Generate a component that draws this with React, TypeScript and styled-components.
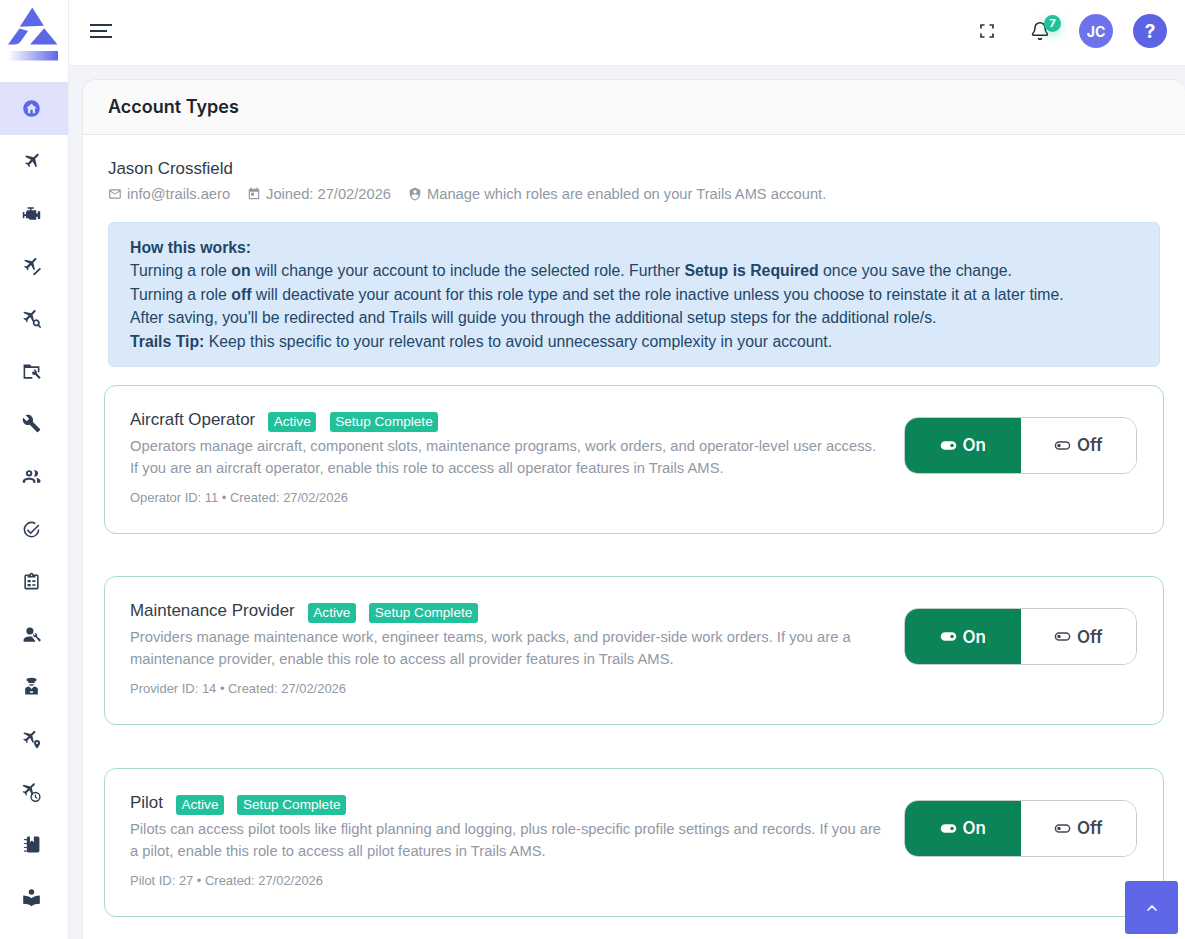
import React from "react";
import styled, { createGlobalStyle } from "styled-components";
import { Bell, ChevronUp } from "lucide-react";

const GlobalStyle = createGlobalStyle`
  html, body {
    margin: 0;
    padding: 0;
    height: 100%;
    overflow: hidden;
    background: #fff;
    font-family: "Liberation Sans", Arial, sans-serif;
  }
  * { box-sizing: border-box; }
`;

const PLANE =
  "M20.56 3.91C21.15 4.5 21.15 5.45 20.56 6.03L16.67 9.92L18.79 19.11L17.38 20.53L13.5 13.25L9.6 17.14L9.96 19.61L8.89 20.67L7.13 17.49L3.94 15.72L5 14.65L7.5 15L11.36 11.11L4.08 7.25L5.5 5.83L14.69 7.95L18.58 4.06C19.17 3.47 20.17 3.47 20.56 3.91Z";
const WRENCH =
  "M22.7,19L13.6,9.9C14.5,7.6 14,4.9 12.1,3C10.1,1 7.1,0.6 4.7,1.7L9,6L6,9L1.6,4.7C0.4,7.1 0.9,10.1 2.9,12.1C4.8,14 7.5,14.5 9.8,13.6L18.9,22.7C19.3,23.1 19.9,23.1 20.3,22.7L22.6,20.4C23.1,20 23.1,19.3 22.7,19Z";

const Shell = styled.div`
  display: flex;
  width: 100%;
  height: 939px;
  overflow: hidden;
`;

const Sidebar = styled.aside`
  flex: 0 0 69px;
  height: 100%;
  background: #fff;
  border-right: 1px solid #eceef6;
  display: flex;
  flex-direction: column;
`;

const LogoBar = styled.div`
  height: 66px;
  flex-shrink: 0;
  display: flex;
  align-items: flex-start;
`;

const Nav = styled.nav`
  padding-top: 16px;
  display: flex;
  flex-direction: column;
`;

const NavItem = styled.div<{ $active?: boolean }>`
  height: 52.6px;
  flex-shrink: 0;
  display: flex;
  align-items: center;
  padding-left: 22px;
  background: ${(p) => (p.$active ? "#e0e1fa" : "transparent")};
  color: ${(p) => (p.$active ? "#5d68e6" : "#2f3d55")};
`;

const NavSvg = styled.svg`
  width: 19px;
  height: 19px;
  fill: currentColor;
  display: block;
`;

const Main = styled.div`
  flex: 1;
  min-width: 0;
  display: flex;
  flex-direction: column;
`;

const TopBar = styled.header`
  height: 66px;
  flex-shrink: 0;
  background: #fff;
  border-bottom: 1px solid #eff0f6;
  display: flex;
  align-items: center;
  padding: 0 18px 3px 21px;
`;

const Burger = styled.div`
  display: flex;
  flex-direction: column;
  gap: 4px;
  width: 22px;
`;

const BurgerLine = styled.span<{ $short?: boolean }>`
  display: block;
  height: 2px;
  width: ${(p) => (p.$short ? "17px" : "22px")};
  background: #2a3547;
`;

const TopActions = styled.div`
  margin-left: auto;
  display: flex;
  align-items: center;
`;

const BellWrap = styled.div`
  position: relative;
  width: 20px;
  height: 20px;
  margin-left: 35px;
  color: #1f2937;
  display: flex;
`;

const BellBadge = styled.span`
  position: absolute;
  top: -6px;
  left: 14px;
  width: 17px;
  height: 17px;
  border-radius: 50%;
  background: #22c09b;
  box-shadow: 0 3px 10px rgba(34, 192, 155, 0.35);
  color: #fff;
  font: 700 11px/17px Inter, sans-serif;
  text-align: center;
`;

const RoundButton = styled.div<{ $left: number; $bg: string; $size: number }>`
  width: 34px;
  height: 34px;
  margin-left: ${(p) => p.$left}px;
  border-radius: 50%;
  background: ${(p) => p.$bg};
  color: #fff;
  display: flex;
  align-items: center;
  justify-content: center;
  font-family: Inter, sans-serif;
  font-size: ${(p) => p.$size}px;
  font-weight: 700;
`;

const Content = styled.main`
  flex: 1;
  min-height: 0;
  background: #f3f4f9;
  padding: 13px 0 0 13px;
`;

const Card = styled.section`
  background: #fff;
  border: 1px solid #e6e8ee;
  border-width: 1px 0 0 1px;
  border-radius: 14px 14px 0 0;
  height: 900px;
`;

const CardHeader = styled.div`
  height: 55px;
  background: #fafafa;
  border-bottom: 1px solid #e4e5ea;
  border-radius: 14px 14px 0 0;
  padding-left: 25px;
  display: flex;
  align-items: center;
`;

const CardTitle = styled.h1`
  margin: 0;
  font: 600 18px/24px Inter, sans-serif;
  color: #212529;
`;

const CardBody = styled.div`
  padding: 23px 21px 0 21px;
`;

const Profile = styled.div`
  padding: 0 4px;
`;

const ProfileName = styled.div`
  font-size: 16.9px;
  line-height: 22px;
  color: #343a46;
`;

const ProfileMeta = styled.div`
  display: flex;
  margin-top: 4px;
  gap: 17px;
  font-size: 14.7px;
  line-height: 20px;
  color: #9199a5;
`;

const MetaItem = styled.span`
  display: flex;
  align-items: center;
  gap: 5px;
`;

const MetaSvg = styled.svg`
  width: 14px;
  height: 14px;
  fill: #9199a5;
`;

const InfoBox = styled.div`
  margin: 18px 4px 17.5px;
  padding: 12.6px 21px;
  height: 145px;
  background: #d9e9fa;
  border: 1px solid #cde2f7;
  border-radius: 6px;
  color: #1f4668;
  font-size: 15.8px;
  line-height: 23.6px;
`;

const InfoLine = styled.div`
  white-space: nowrap;
`;

const Roles = styled.div`
  display: flex;
  flex-direction: column;
  gap: 42.5px;
`;

const RoleCard = styled.article`
  height: 149px;
  border: 1px solid #a9dcc9;
  border-radius: 12px;
  background: #fff;
  padding: 23px 26px 0 25px;
  display: flex;
  justify-content: space-between;
`;

const RoleInfo = styled.div`
  width: 760px;
`;

const RoleHead = styled.div`
  display: flex;
  align-items: center;
  height: 22px;
`;

const RoleName = styled.h2`
  margin: 0 13px 0 0;
  font-size: 16.95px;
  font-weight: 400;
  color: #343a46;
`;

const Tag = styled.span`
  height: 20px;
  margin: 4px 13.5px 0 0;
  padding: 0 5.5px;
  border-radius: 3px;
  background: #22c09b;
  color: #fff;
  font-size: 13.6px;
  line-height: 20px;
  white-space: nowrap;
`;

const RoleDesc = styled.p`
  margin: 4px 0 0;
  font-size: 14.75px;
  line-height: 22px;
  color: #9199a5;
  white-space: nowrap;
`;

const RoleMeta = styled.div`
  margin-top: 10px;
  font-size: 12.95px;
  line-height: 18px;
  color: #9199a5;
`;

const Toggle = styled.div`
  width: 233px;
  height: 57px;
  margin-top: 8px;
  border: 1px solid #c9cace;
  border-radius: 14px;
  overflow: hidden;
  display: flex;
`;

const ToggleSide = styled.div<{ $on?: boolean }>`
  flex: 1;
  display: flex;
  align-items: center;
  justify-content: center;
  gap: 6px;
  background: ${(p) => (p.$on ? "#0b8457" : "#fff")};
  color: ${(p) => (p.$on ? "#fff" : "#3f4753")};
  font: 600 17px/20px Inter, sans-serif;
`;

const ToggleSvg = styled.svg`
  width: 17px;
  height: 17px;
  fill: currentColor;
`;

const ScrollTop = styled.div`
  position: fixed;
  left: 1125px;
  top: 881px;
  width: 53px;
  height: 53px;
  border-radius: 3px;
  background: #5f67e8;
  color: #fff;
  display: flex;
  align-items: center;
  justify-content: center;
`;

const Plane = ({ x = 0, y = 0, s = 1 }: { x?: number; y?: number; s?: number }) => (
  <path d={PLANE} transform={`translate(${x} ${y}) scale(${s})`} />
);

const navIcons: React.ReactNode[] = [
  <path
    key="home"
    fillRule="evenodd"
    d="M12 1.500a10.500 10.500 0 1 0 0 21 10.500 10.500 0 0 0 0-21Zm0 4.600 6.500 5.600h-2v6.200h-3v-4.400h-3v4.400h-3v-6.200h-2L12 6.100Z"
  />,
  <Plane key="plane" />,
  <path
    key="engine"
    d="M7,4V6H10V8H7L5,10V13H3V10H1V18H3V15H5V18H8L10,20H18V16H20V19H23V9H20V12H18V8H12V6H15V4H7Z"
  />,
  <g key="edit">
    <Plane x={-1} y={-2} s={0.92} />
    <path d="M22.500 13.500l1.500 1.500-7.500 7.500-2.500.700.700-2.500z" />
  </g>,
  <g key="search">
    <Plane x={-2} y={-2} s={0.92} />
    <path
      fillRule="evenodd"
      d="M18 13a4.500 4.500 0 0 1 3.700 7l2.600 2.600-1.500 1.500-2.600-2.600A4.500 4.500 0 1 1 18 13Zm0 2.200a2.300 2.300 0 1 0 0 4.600 2.300 2.300 0 0 0 0-4.600Z"
    />
  </g>,
  <g key="folder">
    <path d="M2 3h8l2 2.500h10V13h-2V7.500H4V19h9v2H2Z" />
    <path d="M14 11.500a3.500 3.500 0 0 0-1 3.700 3.500 3.500 0 0 0 3.600 1l5 5.300 2-2-5-5.200a3.500 3.500 0 0 0-4.300-4.500l2 2-1.200 1.200Z" />
  </g>,
  <path key="wrench" d={WRENCH} />,
  <g key="people" fillRule="evenodd">
    <path d="M9 4a4 4 0 1 1 0 8 4 4 0 0 1 0-8Zm0 2.400a1.600 1.600 0 1 0 0 3.200 1.600 1.600 0 0 0 0-3.200Z" />
    <path d="M1 20v-2c0-3 4-4.500 8-4.500s8 1.500 8 4.500v2h-3v-2c0-1-2.300-1.800-5-1.800S4 17 4 18v2Z" />
    <path d="M15 4.200a4 4 0 1 1 0 7.600 5.800 5.800 0 0 0 0-7.600ZM18 13.500c3 .6 5.500 2 5.500 4.500l-1 2H19v-2c0-1.800-.1-3.300-1-4.500Z" />
  </g>,
  <g key="check">
    <path d="M12 2a10 10 0 0 1 5.500 1.700l-1.200 1.700A8 8 0 1 0 20 12h2A10 10 0 1 1 12 2Z" />
    <path d="M20.600 5.600 22 7 11 18l-5-5 1.400-1.400L11 15.200Z" />
  </g>,
  <path
    key="clipboard"
    fillRule="evenodd"
    d="M19 3h-4.200a3 3 0 0 0-5.600 0H5a2 2 0 0 0-2 2v15a2 2 0 0 0 2 2h14a2 2 0 0 0 2-2V5a2 2 0 0 0-2-2Zm-7 0a1 1 0 1 1 0 2 1 1 0 0 1 0-2ZM5 20V5h2v2h10V5h2v15Zm2-10h4v3H7Zm6 .500h4v2h-4ZM7 15h4v3H7Zm6 .500h4v2h-4Z"
  />,
  <g key="account-wrench">
    <circle cx="10" cy="7.500" r="4.500" />
    <path d="M2 21v-2c0-3 4-4.500 8-4.500 1 0 2 .100 3 .300l.800 2 2.700 2.700V21Z" />
    <path d="M14 11.500a3.200 3.200 0 0 0 3.500 4l4.500 5.500 2-2-5-4.500a3.200 3.200 0 0 0-3.500-4.300l1.700 1.800-1.200 1.200Z" />
  </g>,
  <g key="pilot" fillRule="evenodd">
    <path d="M12 1c3.500 0 6.500 1 6.500 2.500 0 1-1 1.700-2.500 2.200V7.500H8V5.700C6.500 5.200 5.500 4.500 5.500 3.500 5.500 2 8.500 1 12 1Z" />
    <path d="M8.500 9h7a4 4 0 0 1-7 0Z" />
    <path d="M4 15c0-1.500 2-2.500 5-3l3 3 3-3c3 .5 5 1.500 5 3v7H4Zm6 3v2h4v-2Z" />
  </g>,
  <g key="plane-pin">
    <Plane x={-2} y={-2} s={0.9} />
    <path
      fillRule="evenodd"
      d="M19 12.500a3.800 3.800 0 0 1 3.800 3.800c0 2.800-3.800 7.200-3.800 7.200s-3.800-4.400-3.800-7.200a3.800 3.800 0 0 1 3.800-3.800Zm0 2.500a1.300 1.300 0 1 0 0 2.600 1.300 1.300 0 0 0 0-2.600Z"
    />
  </g>,
  <g key="plane-clock">
    <Plane x={-3} y={-3} s={0.92} />
    <path
      fillRule="evenodd"
      d="M17 11a6.500 6.500 0 1 1 0 13 6.500 6.500 0 0 1 0-13Zm0 1.800a4.700 4.700 0 1 0 0 9.400 4.700 4.700 0 0 0 0-9.400Zm-.8 1.700h1.500v3l2.300 1.300-.700 1.200-3.100-1.800Z"
    />
  </g>,
  <g key="notebook">
    <path d="M8 2h2v7l2.500-2 2.500 2V2h1v0h4a2 2 0 0 1 2 2v16a2 2 0 0 1-2 2H8a2 2 0 0 1-2-2V4a2 2 0 0 1 2-2Z" />
    <path d="M3 5h3v1.500H3a.750.750 0 0 1 0-1.500Zm0 5h3v1.500H3A.750.750 0 0 1 3 10Zm0 5h3v1.500H3a.750.750 0 0 1 0-1.500Zm0 4.500h3V21H3a.750.750 0 0 1 0-1.500Z" />
  </g>,
  <g key="reader">
    <circle cx="12" cy="5" r="3.500" />
    <path d="M1.500 9.500c4 0 8 1.300 10.500 3.500 2.500-2.200 6.500-3.500 10.500-3.500V20c-4 0-8 1-10.500 3-2.500-2-6.500-3-10.500-3Z" />
  </g>,
];

const roles = [
  {
    name: "Aircraft Operator",
    lines: [
      "Operators manage aircraft, component slots, maintenance programs, work orders, and operator-level user access.",
      "If you are an aircraft operator, enable this role to access all operator features in Trails AMS.",
    ],
    meta: "Operator ID: 11 • Created: 27/02/2026",
  },
  {
    name: "Maintenance Provider",
    lines: [
      "Providers manage maintenance work, engineer teams, work packs, and provider-side work orders. If you are a",
      "maintenance provider, enable this role to access all provider features in Trails AMS.",
    ],
    meta: "Provider ID: 14 • Created: 27/02/2026",
  },
  {
    name: "Pilot",
    lines: [
      "Pilots can access pilot tools like flight planning and logging, plus role-specific profile settings and records. If you are",
      "a pilot, enable this role to access all pilot features in Trails AMS.",
    ],
    meta: "Pilot ID: 27 • Created: 27/02/2026",
  },
];

const Logo = () => (
  <svg width="68" height="66" viewBox="0 0 68 66">
    <defs>
      <linearGradient id="logoBar" x1="0" x2="1" y1="0" y2="0">
        <stop offset="0" stopColor="#5d68e6" stopOpacity="0" />
        <stop offset="1" stopColor="#5d68e6" />
      </linearGradient>
    </defs>
    <path d="M32.300 7.500 43.800 25.800 19.800 26.800Z" fill="#5d68e6" />
    <path d="M44.200 28.300 57.500 44.500H30Z" fill="#5d68e6" />
    <path d="M19.500 28.500 28 31 21 41C19.500 43.500 17 44.500 14.500 44.500H8Z" fill="#5d68e6" />
    <rect x="8" y="51" width="50" height="9.500" fill="url(#logoBar)" />
  </svg>
);

const Fullscreen = () => (
  <svg width="16" height="16" viewBox="0 0 16 16" fill="none" stroke="#2a3547" strokeWidth="1.700">
    <path d="M2 5.500V2h3.500M10.500 2H14v3.500M14 10.500V14h-3.500M5.500 14H2v-3.500" />
  </svg>
);

const ToggleIcon = ({ on }: { on?: boolean }) =>
  on ? (
    <ToggleSvg viewBox="0 0 24 24">
      <path d="M17 6H7a6 6 0 0 0 0 12h10a6 6 0 0 0 0-12Zm0 8.500a2.500 2.500 0 1 1 0-5 2.500 2.500 0 0 1 0 5Z" fillRule="evenodd" />
    </ToggleSvg>
  ) : (
    <ToggleSvg viewBox="0 0 24 24">
      <path
        fillRule="evenodd"
        d="M17 6H7a6 6 0 0 0 0 12h10a6 6 0 0 0 0-12Zm0 10H7a4 4 0 0 1 0-8h10a4 4 0 0 1 0 8ZM7 9.500a2.500 2.500 0 1 0 0 5 2.500 2.500 0 0 0 0-5Z"
      />
    </ToggleSvg>
  );

export default function App() {
  return (
    <Shell>
      <GlobalStyle />
      <Sidebar>
        <LogoBar>
          <Logo />
        </LogoBar>
        <Nav>
          {navIcons.map((icon, i) => (
            <NavItem key={i} $active={i === 0}>
              <NavSvg viewBox="0 0 24 24">{icon}</NavSvg>
            </NavItem>
          ))}
        </Nav>
      </Sidebar>
      <Main>
        <TopBar>
          <Burger>
            <BurgerLine />
            <BurgerLine $short />
            <BurgerLine />
          </Burger>
          <TopActions>
            <Fullscreen />
            <BellWrap>
              <Bell size={20} strokeWidth={1.8} />
              <BellBadge>7</BellBadge>
            </BellWrap>
            <RoundButton $left={29} $bg="#6d73ea" $size={14}>
              JC
            </RoundButton>
            <RoundButton $left={20} $bg="#5d64e4" $size={19}>
              ?
            </RoundButton>
          </TopActions>
        </TopBar>
        <Content>
          <Card>
            <CardHeader>
              <CardTitle>Account Types</CardTitle>
            </CardHeader>
            <CardBody>
              <Profile>
                <ProfileName>Jason Crossfield</ProfileName>
                <ProfileMeta>
                  <MetaItem>
                    <MetaSvg viewBox="0 0 24 24">
                      <path d="M22 6C22 4.900 21.100 4 20 4H4C2.900 4 2 4.900 2 6V18C2 19.100 2.900 20 4 20H20C21.100 20 22 19.100 22 18V6M20 6L12 11L4 6H20M20 18H4V8L12 13L20 8V18Z" />
                    </MetaSvg>
                    info@trails.aero
                  </MetaItem>
                  <MetaItem>
                    <MetaSvg viewBox="0 0 24 24">
                      <path d="M7,10H12V15H7M19,19H5V8H19M19,3H18V1H16V3H8V1H6V3H5C3.890,3 3,3.900 3,5V19A2,2 0 0,0 5,21H19A2,2 0 0,0 21,19V5A2,2 0 0,0 19,3Z" />
                    </MetaSvg>
                    Joined: 27/02/2026
                  </MetaItem>
                  <MetaItem>
                    <MetaSvg viewBox="0 0 24 24">
                      <path d="M12,1L3,5V11C3,16.550 6.840,21.740 12,23C17.160,21.740 21,16.550 21,11V5L12,1M12,5A3,3 0 0,1 15,8A3,3 0 0,1 12,11A3,3 0 0,1 9,8A3,3 0 0,1 12,5M17.130,17C15.920,18.850 14.110,20.240 12,20.920C9.890,20.240 8.080,18.850 6.870,17C6.530,16.500 6.240,16 6,15.470C6,13.820 8.710,12.470 12,12.470C15.290,12.470 18,13.790 18,15.470C17.760,16 17.470,16.500 17.130,17Z" />
                    </MetaSvg>
                    Manage which roles are enabled on your Trails AMS account.
                  </MetaItem>
                </ProfileMeta>
              </Profile>
              <InfoBox>
                <InfoLine>
                  <b>How this works:</b>
                </InfoLine>
                <InfoLine>
                  Turning a role <b>on</b> will change your account to include the selected role. Further{" "}
                  <b>Setup is Required</b> once you save the change.
                </InfoLine>
                <InfoLine>
                  Turning a role <b>off</b> will deactivate your acount for this role type and set the role inactive
                  unless you choose to reinstate it at a later time.
                </InfoLine>
                <InfoLine>
                  After saving, you'll be redirected and Trails will guide you through the additional setup steps for
                  the additional role/s.
                </InfoLine>
                <InfoLine>
                  <b>Trails Tip:</b> Keep this specific to your relevant roles to avoid unnecessary complexity in your
                  account.
                </InfoLine>
              </InfoBox>
              <Roles>
                {roles.map((role) => (
                  <RoleCard key={role.name}>
                    <RoleInfo>
                      <RoleHead>
                        <RoleName>{role.name}</RoleName>
                        <Tag>Active</Tag>
                        <Tag>Setup Complete</Tag>
                      </RoleHead>
                      <RoleDesc>
                        {role.lines[0]}
                        <br />
                        {role.lines[1]}
                      </RoleDesc>
                      <RoleMeta>{role.meta}</RoleMeta>
                    </RoleInfo>
                    <Toggle>
                      <ToggleSide $on>
                        <ToggleIcon on />
                        On
                      </ToggleSide>
                      <ToggleSide>
                        <ToggleIcon />
                        Off
                      </ToggleSide>
                    </Toggle>
                  </RoleCard>
                ))}
              </Roles>
            </CardBody>
          </Card>
        </Content>
      </Main>
      <ScrollTop>
        <ChevronUp size={16} strokeWidth={2.5} />
      </ScrollTop>
    </Shell>
  );
}
